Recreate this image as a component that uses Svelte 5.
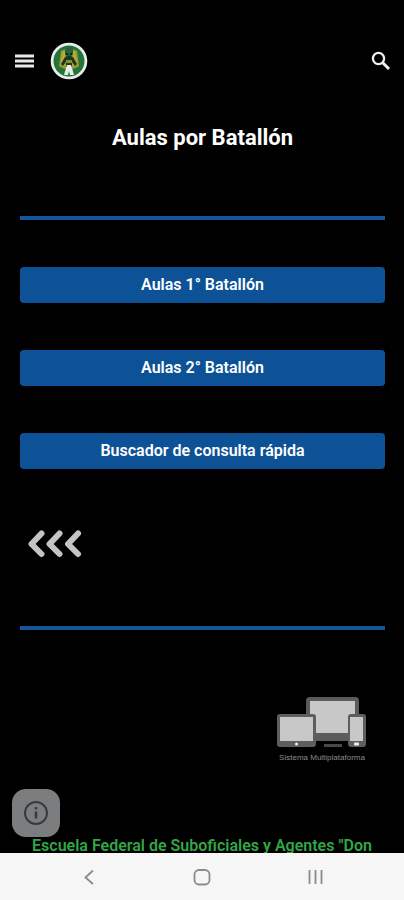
<script>
  const rooms = ['Aulas 1° Batallón', 'Aulas 2° Batallón', 'Buscador de consulta rápida'];
</script>

<div class="app">
  <div class="page">
    <header>
      <button class="icon" aria-label="Menú">
        <svg width="20" height="16" viewBox="0 0 20 16" fill="#e8e8e8">
          <path d="M1 1.500h19v3H1zM1 6.500h19v3H1zM1 11.500h19v3H1z" />
        </svg>
      </button>
      <a class="logo" href="#inicio" aria-label="Inicio">
        <svg width="38" height="38" viewBox="0 0 38 38">
          <circle cx="19" cy="19" r="18.3" fill="#e9eeea" />
          <circle cx="19" cy="19" r="15.5" fill="#23743b" />
          <path d="M11 9Q19 4 27 9L29 24Q24 28 19 27Q14 28 9 24Z" fill="#a39a2d" />
          <path d="M13 9l5 2v10l-4 3-3-4zM25 9l-5 2v10l4 3 3-4z" fill="#b9a936" />
          <path d="M15 7q4-3 8 0v6q-4 3-8 0z" fill="#28613a" />
          <path d="M16 11h2v2h-2zM20 11h2v2h-2z" fill="#10251a" />
          <path d="M15 15q4-3 8 0l4 7-2 2-3-4v5h-6v-5l-3 4-2-2z" fill="#17391f" />
          <path d="M16 18h6v3h-6z" fill="#8b8d31" />
          <path d="M17 23h4l1 3 2 7h-4l-1-4-1 4h-4l2-7z" fill="#e4f0e7" />
        </svg>
      </a>
      <button class="icon search" aria-label="Buscar">
        <svg width="20" height="20" viewBox="0 0 20 20" fill="none" stroke="#efefef">
          <circle cx="7.5" cy="7.5" r="5.6" stroke-width="2.3" />
          <path d="M11.5 11.5L18 18" stroke-width="3" />
        </svg>
      </button>
    </header>

    <main>
      <h1>Aulas por Batallón</h1>
      <hr />
      <nav class="rooms" aria-label="Aulas">
        {#each rooms as room}
          <a href="#aulas">{room}</a>
        {/each}
      </nav>
      <a class="back" href="#volver" aria-label="Volver">
        <svg width="56" height="28" viewBox="0 0 56 28" fill="none" stroke="#c4c4c4" stroke-width="6" stroke-linecap="round" stroke-linejoin="round">
          <path d="M14.500 3.500L4.500 14l10 10M32.500 3.500L22.500 14l10 10M51 3.500L41 14l10 10" />
        </svg>
      </a>
      <hr />
      <figure>
        <svg width="90" height="52" viewBox="0 0 90 52">
          <rect x="29" y="0" width="53" height="44" rx="4" fill="#5b5b5b" />
          <rect x="33" y="4" width="45" height="32" fill="#c8c8c8" />
          <path d="M47 47h18v3H47z" fill="#484848" />
          <rect x="0" y="17" width="39" height="33" rx="3" fill="#5e5e5e" />
          <rect x="3" y="20" width="33" height="24" fill="#c8c8c8" />
          <circle cx="19.500" cy="47" r="1.500" fill="#eee" />
          <rect x="71" y="17" width="18" height="33" rx="3" fill="#5e5e5e" />
          <rect x="73" y="20" width="13" height="24" fill="#c8c8c8" />
          <rect x="77" y="45.500" width="5" height="3" rx="1" fill="#eee" />
        </svg>
        <figcaption>Sistema Multiplataforma</figcaption>
      </figure>
    </main>

    <footer>Escuela Federal de Suboficiales y Agentes "Don</footer>

    <button class="info" aria-label="Información">
      <svg width="26" height="26" viewBox="0 0 26 26" fill="none" stroke="#353b40" stroke-width="2">
        <circle cx="13" cy="13" r="11" />
        <path d="M13 11.500v7M13 7v2.500" stroke-width="2.500" />
      </svg>
    </button>
  </div>

  <nav class="system" aria-label="Sistema">
    <button aria-label="Atrás">
      <svg width="20" height="20" viewBox="0 0 20 20"><path d="M15 3.500L7.500 10.500l7.500 6.500" /></svg>
    </button>
    <button aria-label="Pantalla de inicio">
      <svg width="20" height="20" viewBox="0 0 20 20"><rect x="2.500" y="3" width="15" height="14.500" rx="4.500" /></svg>
    </button>
    <button aria-label="Recientes">
      <svg width="20" height="20" viewBox="0 0 20 20"><path d="M3.500 3v14M9.500 3v14M15.500 3v14" /></svg>
    </button>
  </nav>
</div>

<style>
  :global(body) {
    margin: 0;
    background: #000;
  }
  .app {
    height: 100vh;
    display: flex;
    flex-direction: column;
    font-family: Roboto, sans-serif;
    color: #fff;
  }
  .page {
    position: relative;
    flex: 1;
    min-height: 0;
    overflow: hidden;
    background: #000;
  }
  button {
    border: 0;
    padding: 0;
    background: none;
  }
  svg {
    display: block;
  }
  header {
    display: flex;
    align-items: center;
    padding: 42px 13px 0 14px;
  }
  .logo {
    margin-left: 16px;
  }
  .search {
    margin-left: auto;
  }
  main {
    padding: 42px 19px 0 20px;
  }
  h1 {
    margin: 0 0 62px;
    font-size: 22px;
    line-height: 32px;
    font-weight: 700;
    text-align: center;
  }
  hr {
    height: 4px;
    margin: 0;
    border: 0;
    background: #155699;
  }
  .rooms {
    display: flex;
    flex-direction: column;
    gap: 47px;
    padding: 47px 0 61px;
  }
  .rooms a {
    border-radius: 4px;
    background: #0d5296;
    color: #fff;
    font-size: 16px;
    line-height: 36px;
    font-weight: 600;
    text-align: center;
    text-decoration: none;
  }
  .back {
    display: block;
    width: 56px;
    margin: 0 0 68px 7px;
  }
  figure {
    width: 90px;
    margin: 67px 18px 0 auto;
  }
  figcaption {
    margin-top: 3px;
    color: #8c8c8c;
    font-family: "Liberation Sans", sans-serif;
    font-size: 8px;
    line-height: 12px;
    white-space: nowrap;
    text-align: center;
  }
  footer {
    margin-top: 73px;
    color: #32a647;
    font-size: 16px;
    line-height: 18px;
    font-weight: 600;
    text-align: center;
    white-space: nowrap;
  }
  .info {
    position: absolute;
    left: 12px;
    bottom: 16px;
    display: grid;
    place-items: center;
    width: 48px;
    height: 48px;
    border-radius: 14px;
    background: #7c7d7e;
  }
  .system {
    display: flex;
    justify-content: space-between;
    align-items: center;
    height: 47px;
    padding: 0 78px;
    background: #f6f6f6;
  }
  .system svg {
    fill: none;
    stroke: #8b8b8b;
    stroke-width: 1.8;
  }
</style>
